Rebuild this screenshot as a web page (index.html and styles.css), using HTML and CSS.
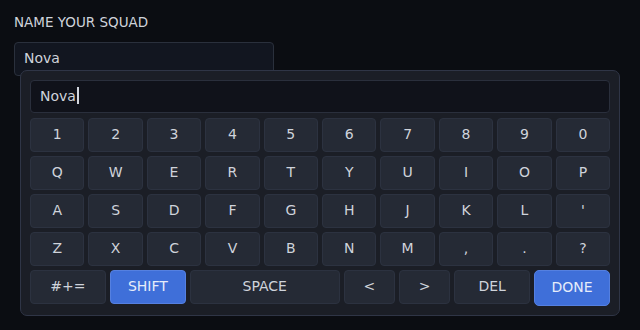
FILE: index.html
```html
<!DOCTYPE html>
<html lang="en">
  <head>
    <meta charset="UTF-8" />
    <meta name="viewport" content="width=device-width, initial-scale=1.0" />
    <title>Name your squad</title>
    <link rel="stylesheet" href="styles.css">
  </head>
  <body>
    <div class="field">
      <div class="field-label">NAME YOUR SQUAD</div>
      <div class="field-input">Nova</div>
    </div>

    <div class="keyboard">
      <div class="kb-display">Nova<span class="caret"></span></div>
      <div class="kb-row">
        <div class="key">1</div><div class="key">2</div><div class="key">3</div><div class="key">4</div><div class="key">5</div>
        <div class="key">6</div><div class="key">7</div><div class="key">8</div><div class="key">9</div><div class="key">0</div>
      </div>
      <div class="kb-row">
        <div class="key">Q</div><div class="key">W</div><div class="key">E</div><div class="key">R</div><div class="key">T</div>
        <div class="key">Y</div><div class="key">U</div><div class="key">I</div><div class="key">O</div><div class="key">P</div>
      </div>
      <div class="kb-row">
        <div class="key">A</div><div class="key">S</div><div class="key">D</div><div class="key">F</div><div class="key">G</div>
        <div class="key">H</div><div class="key">J</div><div class="key">K</div><div class="key">L</div><div class="key">'</div>
      </div>
      <div class="kb-row">
        <div class="key">Z</div><div class="key">X</div><div class="key">C</div><div class="key">V</div><div class="key">B</div>
        <div class="key">N</div><div class="key">M</div><div class="key">,</div><div class="key">.</div><div class="key">?</div>
      </div>
      <div class="kb-row">
        <div class="key wide">#+=</div>
        <div class="key wide active">SHIFT</div>
        <div class="key space">SPACE</div>
        <div class="key">&lt;</div>
        <div class="key">&gt;</div>
        <div class="key wide">DEL</div>
        <div class="key wide active done">DONE</div>
      </div>
    </div>
  </body>
</html>
```

FILE: styles.css
```css
* {
  box-sizing: border-box;
}
body {
  margin: 0;
  padding: 14px;
  height: 330px;
  background-color: #0b0d12;
  color: #cfd3db;
  font-family: "DejaVu Sans", sans-serif;
  font-size: 13px;
}
.field-label {
  font-size: 13.5px;
  line-height: 16px;
}
.field-input {
  margin-top: 12px;
  width: 260px;
  height: 34px;
  padding: 0 9px 3px;
  display: flex;
  align-items: center;
  background-color: #121620;
  border: 1px solid #2a303c;
  border-radius: 4px;
  font-size: 14px;
}
.keyboard {
  position: absolute;
  left: 20px;
  top: 70px;
  width: 600px;
  padding: 9px;
  display: flex;
  flex-direction: column;
  gap: 4px;
  background-color: #1b1e26;
  border: 1px solid #2f3546;
  border-radius: 7px;
}
.kb-display {
  height: 33px;
  margin-bottom: 1px;
  padding: 0 9px 2px;
  display: flex;
  align-items: center;
  background-color: #10121a;
  border: 1px solid #2a2f3c;
  border-radius: 4px;
  font-size: 14px;
}
.caret {
  width: 2px;
  height: 17px;
  margin-left: 1px;
  background-color: #d3d7df;
}
.kb-row {
  display: flex;
  align-items: flex-start;
  gap: 4px;
}
.key {
  flex: 1;
  height: 34px;
  padding-bottom: 2px;
  display: flex;
  justify-content: center;
  align-items: center;
  background-color: #252a35;
  border: 1px solid #2c3240;
  border-radius: 4px;
  color: #cfd3db;
  font-size: 14px;
}
.key.wide {
  flex: 1.5;
}
.key.space {
  flex: 3;
}
.key.active {
  background-color: #3f6fd9;
  border-color: #5580e0;
  color: #e6ecfa;
}
.key.done {
  height: 36px;
  border-radius: 5px;
}
```
